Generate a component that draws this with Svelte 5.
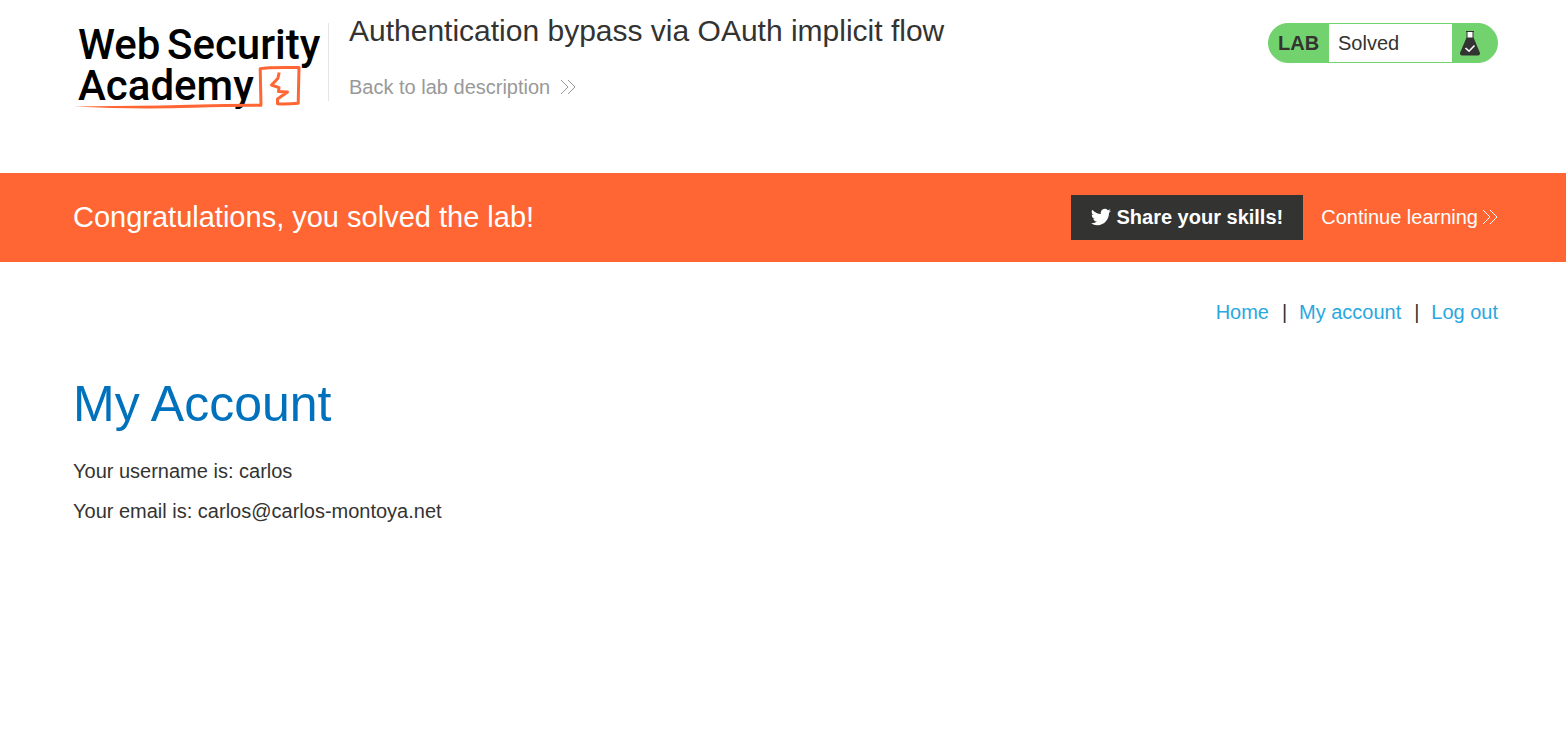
<script>
  const nav = ['Home', 'My account', 'Log out'];
</script>

{#snippet chevrons()}
  <svg class="chevrons" viewBox="0 0 16 16" aria-hidden="true">
    <path d="M1 1 8 8 1 15M8 1 15 8 8 15" />
  </svg>
{/snippet}

<header class="top">
  <a class="logo" href="#academy" aria-label="Web Security Academy">
    <svg viewBox="0 0 256 96">
      <g class="wordmark">
        <text x="5" y="41">Web</text>
        <text x="94" y="41">Security</text>
        <text x="5" y="82">Academy</text>
      </g>
      <g class="sketch">
        <path d="M188 87.500 187.200 50.600Q195 49 226 49.500L225.200 85.300Q214 86.300 204.500 85.800L204.500 81 214.500 74 205.500 73.600 206 69.600 198.500 67 204.800 60.500 206.200 54.500" />
        <path class="underline" d="M1 88.400Q60 91.600 120 89.700Q160 88.400 189 88.700L189 85.800Q120 86.200 90 87.600Q40 88.200 1 88.400Z" />
      </g>
    </svg>
  </a>
  <div class="titles">
    <h2>Authentication bypass via OAuth implicit flow</h2>
    <a class="back" href="#description">Back to lab description {@render chevrons()}</a>
  </div>
  <div class="status">
    <strong>LAB</strong>
    <span class="state">Solved</span>
    <span class="flask">
      <svg viewBox="0 0 20 26" aria-hidden="true">
        <path d="M7 2V8H13V2Z" fill="#fff" />
        <path d="M6 1.500H14M7 1.500V8M13 1.500V8" fill="none" stroke="#333332" stroke-width="1" />
        <path d="M6.500 7.500H13.500L19.800 22.500Q20.500 25.500 18 25.500H2Q-.5 25.500.2 22.500Z" fill="#333332" />
        <path d="m5.500 18 3.500 3.200 5.500-5.700" fill="none" stroke="#fff" stroke-width="1.600" />
      </svg>
    </span>
  </div>
</header>

<section class="banner">
  <h3>Congratulations, you solved the lab!</h3>
  <div class="actions">
    <button type="button">
      <svg viewBox="0 0 24 24" aria-hidden="true">
        <path d="M23.950 4.570a10 10 0 0 1-2.820.780 4.960 4.960 0 0 0 2.160-2.730 9.900 9.900 0 0 1-3.120 1.190 4.920 4.920 0 0 0-8.380 4.480A13.900 13.900 0 0 1 1.640 3.160a4.920 4.920 0 0 0 1.520 6.570 4.900 4.900 0 0 1-2.230-.610v.060a4.920 4.920 0 0 0 3.950 4.830 5 5 0 0 1-2.210.080 4.940 4.940 0 0 0 4.600 3.420A9.870 9.870 0 0 1 0 19.540a13.900 13.900 0 0 0 7.550 2.210c9.050 0 14-7.500 14-13.990v-.630a10 10 0 0 0 2.400-2.560Z" />
      </svg>
      Share your skills!
    </button>
    <a href="#continue">Continue learning {@render chevrons()}</a>
  </div>
</section>

<main>
  <nav>
    {#each nav as item, i}
      {#if i > 0}<span>|</span>{/if}
      <a href="#{item.toLowerCase().replace(' ', '-')}">{item}</a>
    {/each}
  </nav>
  <h1>My Account</h1>
  <p>Your username is: carlos</p>
  <p>Your email is: carlos@carlos-montoya.net</p>
</main>

<style>
  :global(body) {
    background: #fff;
    color: #333332;
    font: 20px/24px "Liberation Sans", Arial, sans-serif;
  }

  a {
    text-decoration: none;
  }

  h1, h2, h3, p {
    margin: 0;
    font-weight: 400;
  }

  .top, .banner, main {
    box-sizing: border-box;
    padding-left: 73px;
    padding-right: 68px;
  }

  .top {
    display: flex;
    align-items: flex-start;
    min-height: 173px;
  }

  .logo {
    flex: none;
    width: 256px;
    height: 96px;
    margin-top: 18px;
    margin-right: -1px;
  }

  .logo svg {
    display: block;
    width: 100%;
    overflow: visible;
  }

  .wordmark {
    fill: #000;
    font: 500 42px Roboto, sans-serif;
  }

  .sketch path {
    fill: none;
    stroke: #ff6633;
    stroke-width: 3;
    stroke-linejoin: round;
  }

  .sketch .underline {
    fill: #ff6633;
    stroke-width: 0;
  }

  .titles {
    flex: 1;
    height: 78px;
    margin-top: 23px;
    padding-left: 20px;
    border-left: 1px solid #e4e4e4;
  }

  h2 {
    margin-top: -10px;
    margin-bottom: 26px;
    font-size: 30px;
    line-height: 36px;
  }

  .back, .actions a {
    display: inline-flex;
    align-items: center;
  }

  .back {
    gap: 10px;
    color: #999;
  }

  .chevrons {
    width: 16px;
    height: 16px;
    fill: none;
    stroke: currentColor;
    stroke-width: 1;
  }

  .status {
    display: flex;
    box-sizing: border-box;
    width: 230px;
    height: 40px;
    margin-top: 23px;
    overflow: hidden;
    border: 1px solid #72d26e;
    border-radius: 20px;
    background: #72d26e;
    line-height: 38px;
  }

  .status strong {
    width: 50px;
    padding-left: 9px;
    padding-right: 1px;
  }

  .state {
    flex: 1;
    padding-left: 9px;
    background: #fff;
  }

  .flask {
    width: 37px;
    padding: 6px 0 0 8px;
  }

  .flask svg {
    display: block;
    width: 20px;
    height: 26px;
  }

  .banner {
    display: flex;
    align-items: center;
    justify-content: space-between;
    padding-top: 22px;
    padding-bottom: 22px;
    background: #ff6633;
    color: #fff;
  }

  h3 {
    padding-bottom: 2px;
    font-size: 29px;
    line-height: 36px;
  }

  .actions {
    display: flex;
    align-items: center;
    gap: 18px;
  }

  .actions a {
    gap: 4px;
    padding-bottom: 2px;
    color: #fff;
  }

  button {
    display: flex;
    align-items: center;
    gap: 5px;
    height: 45px;
    padding: 0 20px 2px;
    border: 0;
    background: #333332;
    color: #fff;
    font: inherit;
    font-weight: 700;
  }

  button svg {
    width: 20px;
    height: 20px;
    fill: #fff;
  }

  main {
    padding-top: 38px;
  }

  nav {
    display: flex;
    justify-content: flex-end;
    gap: 13px;
  }

  nav span {
    width: 4px;
    color: #333332;
    text-align: center;
  }

  nav a {
    color: #29a7df;
  }

  h1 {
    margin-top: 50px;
    margin-bottom: 25px;
    color: #0071bc;
    font-size: 50px;
    line-height: 60px;
  }

  p {
    margin-bottom: 16px;
  }
</style>
